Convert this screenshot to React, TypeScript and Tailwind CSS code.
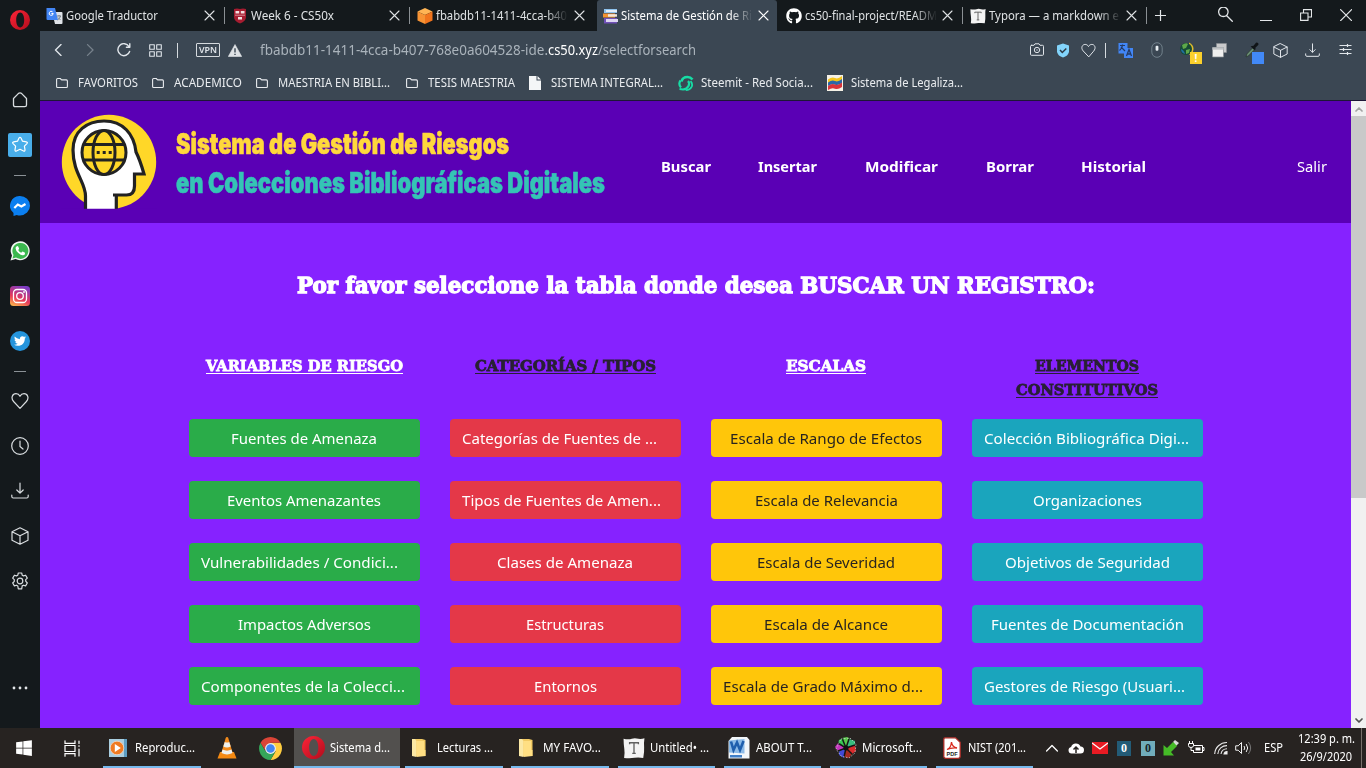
import { useLayoutEffect, useRef, useState } from "react";
import type { ReactNode } from "react";
import { FaGithub, FaTwitter, FaWindows } from "react-icons/fa";

/* Single line of text stretched horizontally to a set width. */
function Fit({ w, className = "", children }: { w: number; className?: string; children: ReactNode }) {
  const ref = useRef<HTMLSpanElement>(null);
  const [scale, setScale] = useState(1);
  useLayoutEffect(() => {
    if (ref.current) {
      const natural = parseFloat(getComputedStyle(ref.current).width);
      if (natural > 0) setScale(w / natural);
    }
  }, [w]);
  return (
    <span className="inline-flex shrink-0 text-left whitespace-nowrap" style={{ width: w }}>
      <span ref={ref} className={`block shrink-0 origin-left whitespace-nowrap ${className}`} style={{ transform: `scaleX(${scale})` }}>
        {children}
      </span>
    </span>
  );
}

function Line({ size, sw = 1.2, className = "", vb = 24, children }: { size: number; sw?: number; className?: string; vb?: number; children: ReactNode }) {
  return (
    <svg width={size} height={size} viewBox={`0 0 ${vb} ${vb}`} fill="none" stroke="currentColor" strokeWidth={sw} strokeLinecap="round" strokeLinejoin="round" className={`shrink-0 ${className}`}>
      {children}
    </svg>
  );
}

const OperaLogo = ({ size }: { size: number }) => (
  <svg width={size} height={size} viewBox="0 0 20 20" className="shrink-0">
    <defs>
      <linearGradient id="op" x1="0" y1="0" x2="1" y2="1">
        <stop offset="0" stopColor="#ff2438" />
        <stop offset="1" stopColor="#b00d1c" />
      </linearGradient>
    </defs>
    <path fill="url(#op)" fillRule="evenodd" d="M10 0a10 10 0 1 0 0 20a10 10 0 1 0 0-20ZM10.2 2.6c2.4 0 4 3.2 4 7.4s-1.600 7.400-4 7.400s-4-3.200-4-7.400s1.600-7.400 4-7.400Z" />
  </svg>
);

const Heart = ({ size, className = "" }: { size: number; className?: string }) => (
  <Line size={size} vb={18} className={className}>
    <path d="M9 16.300 2.600 9.500C-.6 5.700 1.600 1.700 5 1.700c1.800 0 3.200 1 4 2.600.8-1.600 2.200-2.600 4-2.600 3.400 0 5.600 4 2.400 7.800Z" />
  </Line>
);
const Cube = ({ size }: { size: number }) => (
  <Line size={size} vb={18}>
    <path d="M9 .8 17 4.800v8.400l-8 4-8-4V4.800ZM1 4.800l8 4 8-4M9 8.800v8.400" />
  </Line>
);
const Download = ({ size }: { size: number }) => (
  <Line size={size} vb={18}>
    <path d="M9 1v10M5.800 8 9 11.200 12.200 8M.8 13v1.500q0 1.500 1.500 1.500h13.400q1.500 0 1.500-1.500V13" />
  </Line>
);
const Close = ({ className = "" }: { className?: string }) => (
  <Line size={11} vb={11} sw={1.1} className={className}>
    <path d="m1 1 9 9M10 1l-9 9" />
  </Line>
);

const TranslateIcon = () => (
  <svg width="18" height="18" viewBox="0 0 18 18" className="shrink-0">
    <path d="M6 5h9.500q1 0 1 1v10q0 1-1 1H9Z" fill="#dfe3e8" />
    <path d="M1 1h8l3 12H1.500Q.5 13 .5 12V1.500Z" fill="#4285f4" />
    <path d="M7.200 6.500a2 2 0 1 1-.6-1.600M5.400 6.500h1.900" stroke="#fff" strokeWidth="1" fill="none" />
    <path d="M11 9h4M13 8v1m1.500 0q-.5 2.500-3 4M12 10.500l2.500 2.500" stroke="#6d7780" strokeWidth=".9" fill="none" />
  </svg>
);
const ShieldCrest = () => (
  <svg width="14" height="16" viewBox="0 0 14 16" className="shrink-0">
    <path d="M1 1q3-1 6 0 3-1 6 0v8q0 4-6 6.500Q1 13 1 9Z" fill="#a51c30" />
    <path d="M2.500 3h3.700v2.500H2.500ZM7.800 3h3.700v2.500H7.800ZM5 9h4v2.500H5Z" fill="#f3dfe1" />
    <path d="M2 7.200h10" stroke="#d98b95" />
  </svg>
);
const BoxIcon = () => (
  <svg width="16" height="16" viewBox="0 0 16 16" className="shrink-0">
    <path d="M8 0 15.500 3.500 8 7 .5 3.500Z" fill="#ffb454" />
    <path d="M.5 3.500 8 7v9L.5 12.500Z" fill="#f79334" />
    <path d="M15.500 3.500 8 7v9l7.500-3.500Z" fill="#f0741d" />
  </svg>
);
const BooksIcon = () => (
  <svg width="15" height="16" viewBox="0 0 15 16" className="shrink-0">
    <path d="M1 1h13v4H1Z" fill="#8fc3ee" />
    <path d="M3 2h11v2H3Z" fill="#e4eef8" />
    <path d="M0 5.500h12v4H0Z" fill="#f59331" />
    <path d="M5 6.200h9v2.500H5Z" fill="#f3e7da" />
    <path d="M1 10h13v5.500H1Z" fill="#7050b8" />
    <path d="M3 11h12v3H3Z" fill="#ded7f2" />
  </svg>
);
const TyporaIcon = ({ size }: { size: number }) => (
  <svg width={size} height={size} viewBox="0 0 20 20" className="shrink-0">
    <path d="M.5 1.500Q5 2.500 8 1.500t6 .2q3 .4 5.500-.6-.6 4-.3 8t-.8 10q-4-.8-8-.2T1 19q.8-4 .2-8T.5 1.500Z" fill="#f3f3f3" />
    <path d="M6 6.500V5.200h8v1.300M10 5.200v9.600M8.400 14.900h3.200" stroke="#606060" strokeWidth="1.200" fill="none" />
  </svg>
);

type TabProps = { icon: ReactNode; text: string; w: number; width: string; pl: string; gap: string; pr: string; active?: boolean; sep?: boolean; fade?: boolean };
function Tab({ icon, text, w, width, pl, gap, pr, active, sep, fade }: TabProps) {
  return (
    <div className={`relative flex h-[31px] shrink-0 items-center ${width} ${pl} ${pr} ${gap} ${active ? "rounded-t-[3px] bg-[#3b4753] text-white" : "text-[#dfe2e4]"}`}>
      {icon}
      <div className={`flex w-[132px] shrink-0 items-center ${fade ? "[mask-image:linear-gradient(to_right,#000_83%,transparent_100%)]" : ""}`}>
        <Fit w={w} className="text-[12px] leading-[18px]">{text}</Fit>
      </div>
      <Close className="ml-auto" />
      {sep && <div className="absolute top-[7px] right-0 h-[17px] w-px bg-[#8b9094]" />}
    </div>
  );
}

function TabStrip() {
  return (
    <div className="flex h-[31px] items-center bg-[#14191c] text-[#e4e7e9]">
      <Tab icon={<TranslateIcon />} text="Google Traductor" w={92} width="w-[185px]" pl="pl-[6px]" gap="gap-[2px]" pr="pr-[10px]" sep />
      <Tab icon={<ShieldCrest />} text="Week 6 - CS50x" w={83} width="w-[185px]" pl="pl-[8px]" gap="gap-[4px]" pr="pr-[10px]" sep />
      <Tab icon={<BoxIcon />} text="fbabdb11-1411-4cca-b40" w={131} width="w-[187px]" pl="pl-[7px]" gap="gap-[3px]" pr="pr-[12px]" fade />
      <Tab icon={<BooksIcon />} text="Sistema de Gestión de Ri" w={131} width="w-[180px]" pl="pl-[6px]" gap="gap-[3px]" pr="pr-[8px]" active fade />
      <Tab icon={<FaGithub size={16} className="shrink-0 text-white" />} text="cs50-final-project/READM" w={132} width="w-[186px]" pl="pl-[9px]" gap="gap-[3px]" pr="pr-[10px]" sep fade />
      <Tab icon={<TyporaIcon size={16} />} text="Typora — a markdown e" w={130} width="w-[184px]" pl="pl-[7px]" gap="gap-[3px]" pr="pr-[10px]" sep fade />
      <Line size={11} vb={11} className="ml-[8px]"><path d="M5.500 0v11M0 5.500h11" /></Line>
      <Line size={15} vb={15} sw={1.3} className="mb-[2px] ml-[52px]"><path d="M10 5.500a4.700 4.700 0 1 0-9.300 0 4.700 4.700 0 0 0 9.300 0M9 9l5.300 5.300" /></Line>
      <div className="mt-[10px] ml-[27px] h-px w-[12px] bg-[#e4e7e9]" />
      <Line size={12} vb={12} sw={1.1} className="mb-[1px] ml-[28px]"><path d="M.6 4h7.400v7.400H.6ZM3.500 4V.6h8V8H8" strokeLinejoin="miter" /></Line>
      <Line size={12} vb={12} className="mb-[1px] ml-[28px]"><path d="m.6.6 11 11M11.600.6l-11 11" /></Line>
    </div>
  );
}

function AddressBar() {
  const url = "text-[13.500px] leading-[20px]";
  return (
    <div className="flex h-[38px] items-center pr-[14px] pl-[14px] text-[#e0e5ea]">
      <Line size={12} vb={12} sw={1.4}><path d="M7 .6 1.500 6 7 11.400" /></Line>
      <Line size={12} vb={12} sw={1.300} className="ml-[20px] text-[#77828c]"><path d="M1.500.6 7 6l-5.500 5.400" /></Line>
      <Line size={14} vb={14} sw={1.400} className="ml-[19px]"><path d="M12.600 8.500A6 6 0 1 1 12 3.500M12.800.8v3.400H9.400" /></Line>
      <Line size={13} vb={13} sw={1.100} className="ml-[18px]"><path d="M.7.700h4.600v4.600H.7ZM7.700.7h4.600v4.600H7.700ZM.7 7.700h4.600v4.600H.7ZM7.700 7.700h4.600v4.600H7.700Z" /></Line>
      <div className="ml-[15px] h-[15px] w-px bg-[#d5dade]" />
      <div className="ml-[18px] flex h-[14px] w-[24px] items-center justify-center rounded-[1px] border border-[#d5dade]">
        <Fit w={18} className="text-[9px] leading-[12px] font-semibold">VPN</Fit>
      </div>
      <svg width="14" height="13" viewBox="0 0 14 13" className="ml-[8px] shrink-0">
        <path d="M7 .5 13.700 12.500H.3Z" fill="#dfe3e6" stroke="#dfe3e6" strokeLinejoin="round" strokeWidth=".6" />
        <path d="M7 4.200v4.300M7 9.700v1.300" stroke="#3b4753" strokeWidth="1.400" />
      </svg>
      <div className="mb-[1px] ml-[18px] flex">
        <Fit w={288} className={`${url} text-[#aab3bb]`}>fbabdb11-1411-4cca-b407-768e0a604528-ide.</Fit>
        <Fit w={50} className={`${url} text-white`}>cs50.xyz</Fit>
        <Fit w={98} className={`${url} text-[#aab3bb]`}>/selectforsearch</Fit>
      </div>
      <Line size={14} vb={14} sw={1} className="ml-auto"><path d="M1.500 2.300H4L5 .8h4l1 1.500h2.500q1 0 1 1v8q0 1-1 1h-11q-1 0-1-1v-8q0-1 1-1ZM9.700 7A2.700 2.700 0 1 0 4.300 7a2.700 2.700 0 0 0 5.400 0M7.300 7h-.6" /></Line>
      <svg width="14" height="15" viewBox="0 0 14 15" className="ml-[12px] shrink-0">
        <path d="M7 .5 13 2.500V9q-1 4-6 5.500Q2 13 1 9V2.500Z" fill="#82d4fb" />
        <path d="m4 7 2.300 2.500 4-4" stroke="#2d3944" strokeWidth="1.500" fill="none" />
      </svg>
      <Heart size={15} className="ml-[11px]" />
      <div className="ml-[9px] h-[15px] w-px bg-[#d5dade]" />
      <svg width="18" height="17" viewBox="0 0 18 17" className="ml-[11px] shrink-0">
        <path d="M1.500 1h9v5h5.500v10H7V11.500H1.500Z" fill="#4286f5" />
        <path d="M3 3.500h5M5.500 2.500v1q-.5 3-3 5M4 5l4 4" stroke="#243a63" strokeWidth="1.200" fill="none" />
        <path d="m9.500 14 2.500-6.500L14.500 14M10.500 12h3" stroke="#243a63" strokeWidth="1.300" fill="none" />
      </svg>
      <svg width="12" height="16" viewBox="0 0 12 16" className="ml-[16px] shrink-0">
        <rect x=".8" y=".7" width="10.400" height="14.600" rx="5.200" fill="none" stroke="#71808b" />
        <rect x="4.600" y="3.700" width="2.800" height="5" rx="1" fill="#e7edf1" />
      </svg>
      <div className="relative ml-[17px] h-[16px] w-[16px] shrink-0">
        <svg width="14" height="14" viewBox="0 0 14 14">
          <path d="M9 .5q6 3 4 9L9 13" fill="#e0bd2b" />
          <circle cx="6" cy="7" r="6" fill="#164a35" />
          <path d="M2 3q4-3 6-1L6 6 3 7ZM6 8l4-1-1 4-3 1Z" fill="#5ea84a" />
          <path d="M1 7q3 1 4 5-4-1-4-5" fill="#1f6fa0" />
        </svg>
        <div className="absolute top-[10px] left-[10px] flex h-[12px] w-[12px] items-center justify-center bg-[#fbd02c] text-[10px] leading-none font-bold text-white">!</div>
      </div>
      <svg width="15" height="15" viewBox="0 0 15 15" className="ml-[16px] shrink-0">
        <path d="M4.500.5h10v9h-10Z" fill="#c9cacb" stroke="#8d9194" strokeWidth=".5" />
        <path d="M.5 4.500h11v9.500H.5Z" fill="#f0f0ef" stroke="#858b8f" strokeWidth=".7" />
        <path d="M.5 4.500h11v2.200H.5Z" fill="#bfc2c4" />
      </svg>
      <div className="relative ml-[18px] h-[16px] w-[16px] shrink-0">
        <svg width="14" height="16" viewBox="0 0 14 16">
          <path d="m1 15 .8-3 5.700-6 2 1.800-6 6Z" fill="#688c72" stroke="#26332d" strokeWidth=".7" />
          <path d="m7 4 1.500-.2L11 .8q1-.8 2 .2t.2 2l-2.800 2.700.2 1.500-1 .8-4-3.500Z" fill="#101417" />
        </svg>
        <div className="absolute top-[10px] left-[7px] h-[12px] w-[12px] bg-[#4289f7]" />
      </div>
      <span className="ml-[12px]"><Cube size={15} /></span>
      <span className="ml-[17px]"><Download size={15} /></span>
      <Line size={13} vb={13} className="mb-[1px] ml-[19px]"><path d="M.5 2.500h12M.5 6.500h12M.5 10.500h12M8.500 1v3M4.500 5v3M8.500 9v3" strokeLinecap="butt" /></Line>
    </div>
  );
}

const FolderLine = () => (
  <Line size={12} vb={12} sw={1.100}><path d="M.6 2.500q0-1 1-1h2.600l1.400 1.400h4.800q1 0 1 1v5.600q0 1-1 1H1.600q-1 0-1-1Z" /></Line>
);
const FileIcon = () => (
  <svg width="12" height="14" viewBox="0 0 12 14" className="shrink-0"><path d="M0 0h7.500v4.500H12V14H0ZM8.500 0 12 3.500H8.500Z" fill="#f4f6f7" /></svg>
);
const SteemIcon = () => (
  <svg width="17" height="17" viewBox="0 0 17 17" className="shrink-0">
    <path d="M15.500 4.500Q13.500 2 10.500 2 5.500 2 4.500 6.500" fill="none" stroke="#17dca5" strokeWidth="2.600" />
    <path d="M3.500 5.500Q1 9 4 12.500" fill="none" stroke="#17dca5" strokeWidth="2.200" />
    <path d="M13.500 6.200q2.500 2.500 1.200 5.500-1.700 3.500-6 3.500" fill="none" stroke="#17dca5" strokeWidth="1.800" />
    <path d="M11 6q2 2 .5 5-1.500 3-5.500 3.500L2.500 14" fill="none" stroke="#17dca5" strokeWidth="2.200" />
  </svg>
);
const FlagIcon = () => (
  <svg width="16" height="16" viewBox="0 0 16 16" className="shrink-0">
    <path d="M0 0h16v16H0Z" fill="#f5f1e6" />
    <path d="M1 4.500q4-3 7-1.500t7-2v5q-4 3-7 1.700T1 9Z" fill="#f6c51c" />
    <path d="M1 7.500q4-3 7-1.500t7-2v4q-4 3-7 1.700T1 11Z" fill="#2a67a8" />
    <path d="M1 11q4-3 7-1.500t7-2V12q-4 3-7 1.700T1 15Z" fill="#d8333a" />
  </svg>
);

function Bookmarks() {
  const t = "text-[12px] leading-[18px]";
  return (
    <div className="flex h-[28px] items-center pl-[16px] text-[#e9ecef]">
      <div className="mr-[14px] flex items-center gap-[10px]"><FolderLine /><Fit w={60} className={t}>FAVORITOS</Fit></div>
      <div className="mr-[14px] flex items-center gap-[10px]"><FolderLine /><Fit w={68} className={t}>ACADEMICO</Fit></div>
      <div className="mr-[16px] flex items-center gap-[10px]"><FolderLine /><Fit w={112} className={t}>MAESTRIA EN BIBLI...</Fit></div>
      <div className="mr-[14px] flex items-center gap-[10px]"><FolderLine /><Fit w={87} className={t}>TESIS MAESTRIA</Fit></div>
      <div className="mr-[14px] flex items-center gap-[10px]"><FileIcon /><Fit w={112} className={t}>SISTEMA INTEGRAL...</Fit></div>
      <div className="mr-[14px] flex items-center gap-[7px]"><SteemIcon /><Fit w={112} className={t}>Steemit - Red Socia...</Fit></div>
      <div className="flex items-center gap-[8px]"><FlagIcon /><Fit w={112} className={t}>Sistema de Legaliza...</Fit></div>
    </div>
  );
}

const Slot = ({ children }: { children: ReactNode }) => <div className="flex h-[45px] w-[39px] shrink-0 items-center justify-center">{children}</div>;

function Sidebar() {
  return (
    <aside className="flex w-[40px] shrink-0 flex-col bg-[#14191c] text-[#d9dde0]">
      <div className="flex h-[40px] items-center justify-center"><OperaLogo size={20} /></div>
      <div className="h-[37px]" />
      <Slot><Line size={16} vb={16} sw={1.300}><path d="M1.500 6.500 6.300 1.600q1.700-1.500 3.400 0l4.800 4.900v6.500q0 1.700-1.700 1.700H3.200q-1.700 0-1.700-1.700Z" /></Line></Slot>
      <Slot>
        <div className="ml-px flex h-[24px] w-[24px] items-center justify-center rounded-[2px] bg-[#49aeea] text-white">
          <Line size={18} vb={18} sw={1.200}><path d="M8 2q1-1.500 2 0l1.500 3.200 3.800.6q1.800.4.600 1.800l-2.500 2.500.6 3.700q.1 1.900-1.500 1.200L9 13.300 5.500 15q-1.600.7-1.500-1.200l.6-3.700L2.100 7.600Q.9 6.200 2.700 5.800l3.800-.6Z" /></Line>
        </div>
      </Slot>
      <div className="flex h-[16px] items-center justify-center"><div className="h-px w-[12px] bg-[#8b9196]" /></div>
      <Slot>
        <svg width="20" height="20" viewBox="0 0 20 20">
          <path d="M10 0a10 9.700 0 0 1 0 19.400q-1.800 0-3.200-.5L3.500 20v-2.900A9.700 9.700 0 0 1 10 0Z" fill="#0b7ff0" />
          <path d="m4.300 12 3.500-3.500 3.600 2L15.500 8" stroke="#fff" strokeWidth="2.200" fill="none" />
        </svg>
      </Slot>
      <Slot>
        <svg width="20" height="20" viewBox="0 0 20 20">
          <path d="M.5 19.500 2 14.600A9.500 9.500 0 1 1 5.500 18Z" fill="#f2f6f2" />
          <path d="M2.500 17.500 3.500 14A8 8 0 1 1 6 16.600Z" fill="#3cb84f" />
          <path d="M6.500 5.500q1-1 1.700 0l.9 2q0 .7-.9 1.400 1 2 3 2.900l1-1.100q.4-.4 1 0l1.800 1q.6 2-1.700 2.500-2.300.3-5-2.200T5.500 7q.2-1 1-1.500Z" fill="#fff" />
        </svg>
      </Slot>
      <Slot>
        <svg width="20" height="20" viewBox="0 0 20 20">
          <defs>
            <linearGradient id="ig" x1=".2" y1="1" x2=".6" y2="0">
              <stop offset="0" stopColor="#fbb24c" /><stop offset=".4" stopColor="#e7385a" /><stop offset="1" stopColor="#7d3cc4" />
            </linearGradient>
          </defs>
          <rect width="20" height="20" rx="3.500" fill="url(#ig)" />
          <rect x="3.500" y="3.500" width="13" height="13" rx="3.500" fill="none" stroke="#fff" strokeWidth="1.300" />
          <circle cx="10" cy="10" r="3.300" fill="none" stroke="#fff" strokeWidth="1.300" />
          <circle cx="14" cy="6" r=".9" fill="#fff" />
        </svg>
      </Slot>
      <Slot><div className="flex h-[20px] w-[20px] items-center justify-center rounded-full bg-[#2494dc]"><FaTwitter size={12} className="text-white" /></div></Slot>
      <div className="flex h-[15px] items-center justify-center pt-[2px]"><div className="h-px w-[12px] bg-[#8b9196]" /></div>
      <Slot><Heart size={18} /></Slot>
      <Slot><Line size={18} vb={18}><circle cx="9" cy="9" r="8.300" /><path d="M9 4v5.500l3 2.500" /></Line></Slot>
      <Slot><Download size={18} /></Slot>
      <Slot><Cube size={18} /></Slot>
      <Slot>
        <Line size={18} vb={18}>
          <circle cx="9" cy="9" r="2.800" />
          <path d="M7.300 1h3.400l.5 2.200 1.300.7 2.100-.7 1.700 2.900-1.600 1.600v1.500L16.300 11l-1.700 2.900-2.100-.7-1.300.7-.5 2.900H7.300L6.800 14l-1.300-.8-2.100.7L1.700 11l1.600-1.700V7.700L1.700 6.100l1.700-2.900 2.100.7 1.300-.7Z" />
        </Line>
      </Slot>
      <div className="mt-[62px]"><Slot><svg width="16" height="4" viewBox="0 0 16 4" fill="#e3e6e8"><circle cx="2" cy="2" r="1.400" /><circle cx="8" cy="2" r="1.400" /><circle cx="14" cy="2" r="1.400" /></svg></Slot></div>
    </aside>
  );
}

function HeadLogo() {
  return (
    <svg width="96" height="98" viewBox="0 0 96 98" className="shrink-0">
      <circle cx="48" cy="49" r="47.200" fill="#ffd728" />
      <path d="M24.500 98V83C24 69 12 60 12 34 12 17 26 8 43 8c20 0 30 14 31.500 31l8.500 22h-9.500v12q0 9-8 9H55.300v16Z" fill="#fff" />
      <path d="M24.500 97V83C24.500 69 12 60 12 37 12 18 26 8 43 8c19 0 30 13 32 31q4 8 8 22h-9.500v12q0 9-8 9H52M55.300 82v15" fill="none" stroke="#222" strokeWidth="3.200" />
      <path d="M0 95.700h96V98H0Z" fill="#5a00b5" />
      <g stroke="#222" strokeWidth="3" fill="none">
        <circle cx="43" cy="39.500" r="22" fill="#ffd728" />
        <ellipse cx="43" cy="39.500" rx="11" ry="22" />
        <path d="M23 31.500h40M23 47h40" />
      </g>
      <path d="M35.700 38h3v3h-3ZM41.700 38h3v3h-3ZM47.700 38h3v3h-3Z" fill="#222" />
    </svg>
  );
}

function SiteHeader() {
  const nav = "text-[15px] leading-[24px] font-bold";
  const brand = "font-['Inter'] text-[29px] leading-[39px] font-black [-webkit-text-stroke:0.6px_currentColor]";
  return (
    <header className="flex h-[122px] shrink-0 items-center bg-[#5a00b5] pr-[24px] pl-[21px] text-white">
      <HeadLogo />
      <div className="mt-[1px] ml-[19px] flex flex-col">
        <div className="flex h-[39px] text-[#ffd83c]"><Fit w={333} className={brand}>Sistema de Gestión de Riesgos</Fit></div>
        <div className="flex h-[39px] text-[#35c4b5]"><Fit w={429} className={brand}>en Colecciones Bibliográficas Digitales</Fit></div>
      </div>
      <nav className="mt-[8px] ml-[56px] flex flex-1">
        <Fit w={50} className={nav}>Buscar</Fit>
        <span className="w-[47px]" />
        <Fit w={59} className={nav}>Insertar</Fit>
        <span className="w-[48px]" />
        <Fit w={73} className={nav}>Modificar</Fit>
        <span className="w-[48px]" />
        <Fit w={48} className={nav}>Borrar</Fit>
        <span className="w-[47px]" />
        <Fit w={65} className={nav}>Historial</Fit>
        <span className="flex-1" />
        <Fit w={30} className="text-[15px] leading-[24px]">Salir</Fit>
      </nav>
    </header>
  );
}

type Column = { title: [string, number][]; titleColor: string; button: string; items: [string, number][] };
const columns: Column[] = [
  {
    title: [["VARIABLES DE RIESGO", 197]], titleColor: "text-white", button: "bg-[#2aac49] text-white",
    items: [["Fuentes de Amenaza", 146], ["Eventos Amenazantes", 154], ["Vulnerabilidades / Condici...", 197], ["Impactos Adversos", 133], ["Componentes de la Colecci...", 204]],
  },
  {
    title: [["CATEGORÍAS / TIPOS", 181]], titleColor: "text-[#282033]", button: "bg-[#e43848] text-white",
    items: [["Categorías de Fuentes de ...", 195], ["Tipos de Fuentes de Amen...", 199], ["Clases de Amenaza", 136], ["Estructuras", 78], ["Entornos", 63]],
  },
  {
    title: [["ESCALAS", 80]], titleColor: "text-white", button: "bg-[#ffc60a] text-[#282420]",
    items: [["Escala de Rango de Efectos", 192], ["Escala de Relevancia", 143], ["Escala de Severidad", 138], ["Escala de Alcance", 124], ["Escala de Grado Máximo d...", 200]],
  },
  {
    title: [["ELEMENTOS", 104], ["CONSTITUTIVOS", 142]], titleColor: "text-[#282033]", button: "bg-[#1aa5bd] text-white",
    items: [["Colección Bibliográfica Digi...", 205], ["Organizaciones", 109], ["Objetivos de Seguridad", 165], ["Fuentes de Documentación", 193], ["Gestores de Riesgo (Usuari...", 201]],
  },
];
const truncated = /\.\.\.$/;

function Page() {
  return (
    <main className="flex min-w-0 flex-1 flex-col overflow-hidden bg-[#8622ff]">
      <SiteHeader />
      <h1 className="mt-[46px] flex h-[32px] justify-center pl-px text-white">
        <Fit w={798} className="font-['DejaVu_Serif'] text-[22px] leading-[32px] font-bold [-webkit-text-stroke:1.3px_currentColor]">
          Por favor seleccione la tabla donde desea BUSCAR UN REGISTRO:
        </Fit>
      </h1>
      <div className="mt-[53px] ml-[149px] grid w-[1014px] shrink-0 grid-cols-4 gap-x-[30px]">
        {columns.map((c) => (
          <section key={c.title[0][0]} className="flex flex-col gap-[24px]">
            <h2 className={`mb-[-7px] flex h-[48px] flex-col items-center pr-px ${c.titleColor}`}>
              {c.title.map(([t, w]) => (
                <Fit key={t} w={w} className="font-['DejaVu_Serif'] text-[15px] leading-[24px] font-bold underline decoration-1 underline-offset-2 [-webkit-text-stroke:0.8px_currentColor]">{t}</Fit>
              ))}
            </h2>
            {c.items.map(([t, w]) => (
              <button key={t} className={`flex h-[38px] items-center rounded-[4px] pr-[13px] pl-[12px] ${truncated.test(t) ? "justify-start" : "justify-center"} ${c.button}`}>
                <Fit w={w} className="text-[15px] leading-[24px]">{t}</Fit>
              </button>
            ))}
          </section>
        ))}
      </div>
    </main>
  );
}

function Scrollbar() {
  return (
    <div className="flex w-[15px] shrink-0 flex-col items-center bg-[#f1f1f1]">
      <div className="flex h-[15px] items-center text-[#a3a3a3]"><Line size={8} vb={8} sw={1.700}><path d="m1 6 3-3 3 3" /></Line></div>
      <div className="h-[382px] w-[15px] bg-[#c9c9c9]" />
      <div className="mt-auto flex h-[15px] items-center text-[#505050]"><Line size={8} vb={8} sw={1.700}><path d="m1 2 3 3 3-3" /></Line></div>
    </div>
  );
}

const MediaIcon = () => (
  <svg width="20" height="20" viewBox="0 0 20 20" className="shrink-0">
    <path d="M3 1h16v18H3Z" fill="#5d9dc2" /><path d="M1 1h15v18H1Z" fill="#a9cee0" />
    <circle cx="9" cy="10" r="6.800" fill="#ef7b22" stroke="#f6dfcf" strokeWidth=".7" /><path d="m6.800 6 6 4-6 4Z" fill="#fff" />
  </svg>
);
const VlcIcon = () => (
  <svg width="20" height="22" viewBox="0 0 20 22" className="shrink-0">
    <path d="m3 15-2.500 6.500h19L17 15Z" fill="#f58a12" /><path d="M10 0q1 0 1.300 1L16 17q-6 3-12 0L8.700 1Q9 0 10 0Z" fill="#f28a1c" />
    <path d="m7.800 5-1.500 4.500q3.700 2 7.400 0L12.200 5Q10 6 7.800 5ZM5.500 12.500 4.500 16q5.500 2.800 11 0l-1-3.500q-4.500 2.300-9 0Z" fill="#eef0ee" />
  </svg>
);
const ChromeIcon = () => (
  <svg width="23" height="23" viewBox="0 0 22 22" className="shrink-0">
    <path d="M11 5.500h9.500A11 11 0 0 1 11 22l4.800-8.200Z" fill="#ffcd40" />
    <path d="M1.500 5.500 6.300 13.800 15.500 14 11 22A11 11 0 0 1 1.500 5.500Z" fill="#35a65a" />
    <path d="M11 5.500h9.500A11 11 0 0 0 1.500 5.500L6 13Z" fill="#db4437" /><circle cx="11" cy="11" r="5.200" fill="#eee" /><circle cx="11" cy="11" r="4.100" fill="#4285f4" />
  </svg>
);
const FolderIcon = () => (
  <svg width="14" height="20" viewBox="0 0 14 20" className="shrink-0"><path d="M0 1h10l3.500 1v16H4Z" fill="#f2ca63" /><path d="M0 1h3l1.500 2v16L0 18Z" fill="#fbe8a5" /><path d="M4.500 3H12v9h1.500v6l-9 1Z" fill="#ffdf83" /></svg>
);
const WordIcon = () => (
  <svg width="22" height="22" viewBox="0 0 22 22" className="shrink-0"><path d="M4 0h15l2.500 3v18.500H.5V4Z" fill="#f2f6fa" /><path d="M1 3.500 16.500 2v14.500L1 15.500Z" fill="#8dbbe8" /><path d="m3 4.500 2.500 8.500 3.500-7.500 3 7.500 3.500-9" fill="none" stroke="#1f5fae" strokeWidth="2.600" /><path d="M2 18h12v2.500H2Z" fill="#3f7fc8" /></svg>
);
const PinwheelIcon = () => (
  <svg width="22" height="22" viewBox="0 0 22 22" className="shrink-0">
    <path d="M11 11 7 1l5-1 3 2Z" fill="#57c84b" /><path d="m11 11 3-9 6 2v4Z" fill="#38bc7e" /><path d="m11 11 9-3 1 6-4 3Z" fill="#d82a2c" />
    <path d="m11 11 6 6-3 4-5-1Z" fill="#a52a20" /><path d="m11 11-2 10-5-3V14Z" fill="#4149d6" /><path d="M11 11 3 14 0 10l3-4Z" fill="#c434bd" />
    <path d="M11 11 3 7l1-4 4-2Z" fill="#36c752" /><path d="m7 1 4 10 9-3M3 14l8-3 3-9M3 6l8 5 6 6M9 20l2-9" stroke="#151515" strokeWidth="1.500" fill="none" />
    <circle cx="11" cy="11" r="2.500" fill="#111" /><path d="m6 2 9-1 6 6-1 9-6 5-8-2-5-7Z" fill="none" stroke="#d8d8d8" strokeWidth=".7" strokeDasharray="1.500 1.500" />
  </svg>
);
const PdfIcon = () => (
  <svg width="18" height="22" viewBox="0 0 18 22" className="shrink-0"><path d="M2 .8h10.500l4.700 4.500v14q0 2-2 2H2.800q-2 0-2-2V2.500Q.8.800 2 .800Z" fill="#fff" stroke="#a92a25" strokeWidth="1.300" />
    <path d="M4 12.500q4-1.500 4.500-7.500.5 5 5.500 6-6-.5-10 1.500Z" fill="none" stroke="#d82b20" strokeWidth="1.300" /><text x="9" y="19" textAnchor="middle" fontFamily="Liberation Sans" fontSize="5.500" fontWeight="700" fill="#222">PDF</text></svg>
);

type TaskProps = { icon: ReactNode; text: string; w: number; ml: string; pl: string; gap: string; width?: string; active?: boolean };
function Task({ icon, text, w, ml, pl, gap, width = "w-[98px]", active }: TaskProps) {
  return (
    <div className={`flex h-[40px] shrink-0 items-center border-b-2 border-[#76b9ed] pt-[1px] ${width} ${ml} ${pl} ${gap} ${active ? "bg-[#52504e]" : ""}`}>
      {icon}
      <Fit w={w} className="text-[12px] leading-[18px] text-white">{text}</Fit>
    </div>
  );
}

function Taskbar() {
  return (
    <footer className="flex h-[40px] shrink-0 items-center bg-[#272321] text-white">
      <FaWindows size={18} className="ml-[15px] shrink-0" />
      <Line size={17} vb={17} sw={1.200} className="ml-[31px]"><path d="M1 .8v2.500h10V.8M1 5.500h10v6H1ZM1 16.200v-2.500h10v2.500M15 1v2.500M15 9v7M14.500 6h1" strokeLinejoin="miter" /></Line>
      <Task icon={<MediaIcon />} text="Reproduc..." w={60} ml="ml-[22px]" pl="pl-[5px]" gap="gap-[7px]" />
      <span className="ml-[16px]"><VlcIcon /></span>
      <span className="ml-[22px]"><ChromeIcon /></span>
      <Task icon={<OperaLogo size={23} />} text="Sistema d..." w={60} ml="ml-[12px]" pl="pl-[8px]" gap="gap-[5px]" width="w-[106px]" active />
      <Task icon={<FolderIcon />} text="Lecturas ..." w={56} ml="ml-[5px]" pl="pl-[7px]" gap="gap-[11px]" />
      <Task icon={<FolderIcon />} text="MY FAVO..." w={58} ml="ml-[8px]" pl="pl-[8px]" gap="gap-[10px]" />
      <Task icon={<TyporaIcon size={22} />} text="Untitled• ..." w={59} ml="ml-[9px]" pl="pl-[5px]" gap="gap-[5px]" width="w-[97px]" />
      <Task icon={<WordIcon />} text="ABOUT T..." w={56} ml="ml-[9px]" pl="pl-[4px]" gap="gap-[6px]" width="w-[97px]" />
      <Task icon={<PinwheelIcon />} text="Microsoft..." w={60} ml="ml-[9px]" pl="pl-[5px]" gap="gap-[5px]" width="w-[97px]" />
      <Task icon={<PdfIcon />} text="NIST (201..." w={58} ml="ml-[9px]" pl="pl-[7px]" gap="gap-[7px]" width="w-[97px]" />
      <Line size={12} vb={12} sw={1.300} className="ml-[13px]"><path d="m.6 9 5.400-5.500L11.400 9" /></Line>
      <svg width="16" height="12" viewBox="0 0 16 12" className="ml-[10px] shrink-0"><path d="M3.500 11.500a3.300 3.300 0 0 1-.4-6.500A5 5 0 0 1 12.500 4.500 3.500 3.500 0 0 1 12.500 11.500Z" fill="#fff" /><path d="M8 11V6M5.500 7.500 8 5l2.500 2.500" stroke="#272321" strokeWidth="1.500" fill="none" /></svg>
      <svg width="16" height="12" viewBox="0 0 16 12" className="ml-[8px] shrink-0"><path d="M0 0h16v12H0Z" fill="#e81b23" /><path d="m0 1 8 6 8-6" stroke="#fff" strokeWidth="1.300" fill="none" /></svg>
      <div className="ml-[9px] flex h-[15px] w-[14px] shrink-0 items-center justify-center bg-[#235b76] font-['Liberation_Serif'] text-[12px] leading-none font-bold">0</div>
      <div className="ml-[10px] flex h-[15px] w-[14px] shrink-0 items-center justify-center bg-[#71adbb] font-['Liberation_Serif'] text-[12px] leading-none font-bold text-[#17242b]">0</div>
      <svg width="16" height="16" viewBox="0 0 16 16" className="ml-[8px] shrink-0"><path d="m10 2 2-2 4 3-3 3Z" fill="#d7d9d6" /><path d="M.5 15.500V5l3.500 3L10 2l4 4-6 6 3 3.500Z" fill="#45bb27" /></svg>
      <svg width="17" height="14" viewBox="0 0 17 14" className="ml-[9px] shrink-0" fill="none" stroke="#fff"><path d="M5.500 4.500h9v7h-9V9M14.500 6.500h1.500v3h-1.500M1.500 0v2M4.500 0v2M.5 2.500h5v2q0 2-2.500 2T.5 4.500ZM3 6.500v3h2.500" /><path d="M7.500 6.500h5v3h-5Z" fill="#fff" stroke="none" /></svg>
      <svg width="14" height="14" viewBox="0 0 14 14" className="ml-[9px] shrink-0" fill="none" stroke="#e9e9e9" strokeWidth="1.100"><path d="M.7 13A12 12 0 0 1 13 1.500M3.800 13A9 9 0 0 1 13 4.600M7 13a6 6 0 0 1 6-5.200" /><path d="M10 13a3 3 0 0 1 3-2.500V13Z" fill="#fff" /></svg>
      <svg width="17" height="14" viewBox="0 0 17 14" className="ml-[7px] shrink-0" fill="none" stroke="#f2f2f2"><path d="M.7 4.800h2.500L6.500 1.500v11L3.200 9.200H.7ZM9 5q1.500 2 0 4M11.200 3q3 4 0 8" /><path d="M13.400 1q4.500 6 0 12" stroke="#777" /></svg>
      <span className="ml-[12px] inline-flex"><Fit w={19} className="text-[12px] leading-[18px]">ESP</Fit></span>
      <div className="ml-[14px] flex h-[38px] w-[58px] shrink-0 flex-col items-center justify-center">
        <Fit w={57} className="text-[12px] leading-[18px]">12:39 p. m.</Fit>
        <Fit w={52} className="text-[12px] leading-[18px]">26/9/2020</Fit>
      </div>
      <div className="ml-[6px] h-[40px] w-px bg-[#77706b]" />
    </footer>
  );
}

export default function App() {
  return (
    <div className="flex h-[768px] w-[1366px] flex-col overflow-hidden bg-[#14191c] font-['Noto_Sans','Open_Sans',sans-serif]">
      <div className="flex h-[728px] shrink-0">
        <Sidebar />
        <div className="flex min-w-0 flex-1 flex-col">
          <TabStrip />
          <div className="h-[70px] shrink-0 border-b border-[#1d1636] bg-[#3b4753]">
            <AddressBar />
            <Bookmarks />
          </div>
          <div className="flex min-h-0 flex-1">
            <Page />
            <Scrollbar />
          </div>
        </div>
      </div>
      <Taskbar />
    </div>
  );
}
